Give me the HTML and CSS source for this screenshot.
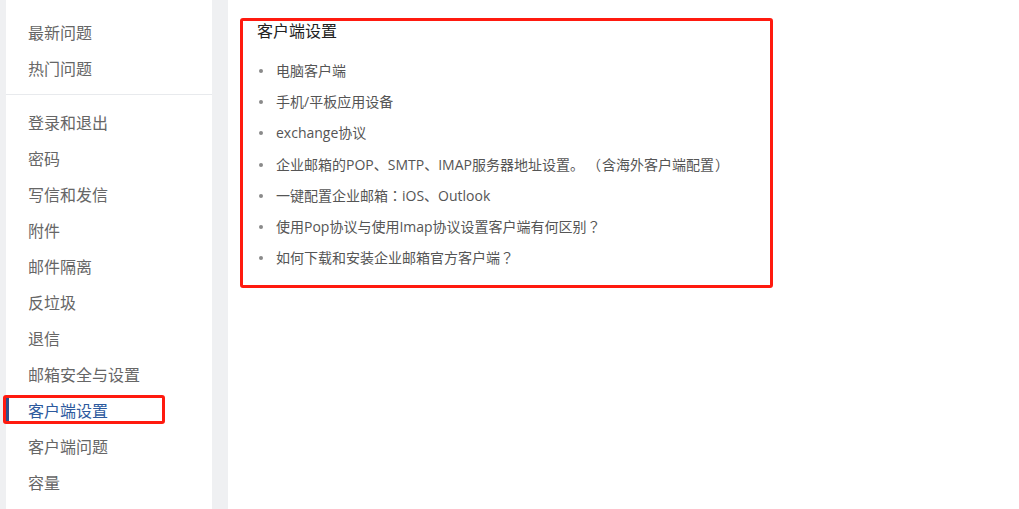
FILE: index.html
```html
<!DOCTYPE html>
<html lang="zh-CN">
<head>
<meta charset="utf-8">
<title>客户端设置</title>
<link rel="stylesheet" href="styles.css">
</head>
<body>
<div class="page">
  <div class="strip"></div>
  <nav class="sidebar">
    <ul class="group">
      <li class="item">最新问题</li>
      <li class="item">热门问题</li>
    </ul>
    <ul class="group group-main">
      <li class="item">登录和退出</li>
      <li class="item">密码</li>
      <li class="item">写信和发信</li>
      <li class="item">附件</li>
      <li class="item">邮件隔离</li>
      <li class="item">反垃圾</li>
      <li class="item">退信</li>
      <li class="item">邮箱安全与设置</li>
      <li class="item active">客户端设置</li>
      <li class="item">客户端问题</li>
      <li class="item">容量</li>
    </ul>
  </nav>
  <div class="gutter"></div>
  <main class="main">
    <h2 class="title">客户端设置</h2>
    <ul class="list">
      <li>电脑客户端</li>
      <li>手机/平板应用设备</li>
      <li>exchange协议</li>
      <li>企业邮箱的POP、SMTP、IMAP服务器地址设置。<span class="paren paren-open">（</span>含海外客户端配置<span class="paren paren-close">）</span></li>
      <li>一键配置企业邮箱<span class="fw" lang="zh-TW">：</span>iOS、Outlook</li>
      <li>使用Pop协议与使用Imap协议设置客户端有何区别<span class="fw" lang="zh-TW">？</span></li>
      <li>如何下载和安装企业邮箱官方客户端<span class="fw" lang="zh-TW">？</span></li>
    </ul>
  </main>
</div>
<div class="mark mark-side"></div>
<div class="mark mark-main"></div>
</body>
</html>
```
FILE: styles.css
```css
* { box-sizing: border-box; }
html, body {
  margin: 0;
  padding: 0;
  background: #ffffff;
  font-family: "Noto Sans CJK SC", sans-serif;
  text-spacing-trim: space-all;
  font-feature-settings: "chws" 0, "halt" 0;
  overflow: hidden;
}
.page {
  display: flex;
  height: 509px;
}
.strip {
  width: 6px;
  background: #eff0f2;
  flex: none;
}
.sidebar {
  width: 206px;
  flex: none;
  background: #ffffff;
  padding-top: 14px;
}
.gutter {
  width: 16px;
  flex: none;
  background: #eff0f2;
}
.group {
  list-style: none;
  margin: 0;
  padding: 0 0 8px 0;
}
.group-main {
  border-top: 1px solid #e8eaed;
  padding-top: 9px;
}
.item {
  position: relative;
  height: 36px;
  line-height: 36px;
  padding-left: 22px;
  font-size: 16px;
  color: #666666;
  white-space: nowrap;
}
.item.active {
  color: #2d5a9e;
}
.item.active::before {
  content: "";
  position: absolute;
  left: 0;
  top: 6px;
  width: 3px;
  height: 24px;
  background: #2d4f8a;
}
.main {
  flex: 1;
  padding: 18px 0 0 29px;
}
.title {
  margin: 0;
  font-size: 16px;
  font-weight: 400;
  line-height: 24px;
  color: #222222;
}
.list {
  list-style: none;
  margin: 13px 0 0 0;
  padding: 0;
  font-family: "Open Sans", "Noto Sans CJK SC", sans-serif;
}
.list li {
  position: relative;
  padding-left: 19px;
  font-size: 14px;
  line-height: 31.2px;
  color: #555555;
  white-space: nowrap;
}
.list li::before {
  content: "";
  position: absolute;
  left: 2px;
  top: 14px;
  width: 4px;
  height: 4px;
  border-radius: 50%;
  background: #8a8a8a;
}
.fw {
  display: inline-block;
  width: 1em;
  text-align: center;
  font-family: "Noto Sans CJK TC", sans-serif;
}
.paren {
  display: inline-block;
  width: 1.3em;
  font-family: "Noto Sans CJK TC", sans-serif;
}
.paren-open {
  text-align: right;
  padding-right: 1px;
}
.paren-close {
  text-align: left;
  padding-left: 1px;
}
.mark {
  position: absolute;
  border: 3px solid #ff1a0f;
  border-radius: 3px;
}
.mark-side {
  left: 3px;
  top: 395px;
  width: 162px;
  height: 29px;
}
.mark-main {
  left: 240px;
  top: 18px;
  width: 533px;
  height: 270px;
}
```
